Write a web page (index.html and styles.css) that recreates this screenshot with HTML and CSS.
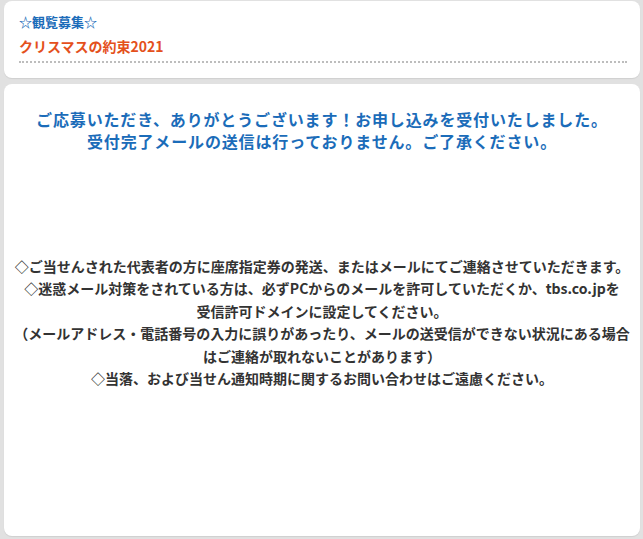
FILE: index.html
```html
<!DOCTYPE html>
<html lang="ja">
<head>
<meta charset="utf-8">
<title>クリスマスの約束2021</title>
<link rel="stylesheet" href="styles.css">
</head>
<body>
<div class="page">
  <section class="card head-card">
    <div class="label">☆観覧募集☆</div>
    <div class="title">クリスマスの約束2021</div>
  </section>
  <section class="card main-card">
    <div class="thanks">
      <p>ご応募いただき、ありがとうございます！お申し込みを受付いたしました。</p>
      <p>受付完了メールの送信は行っておりません。ご了承ください。</p>
    </div>
    <div class="notes">
      <p>◇ご当せんされた代表者の方に座席指定券の発送、またはメールにてご連絡させていただきます。</p>
      <p>◇迷惑メール対策をされている方は、必ずPCからのメールを許可していただくか、tbs.co.jpを<br>受信許可ドメインに設定してください。</p>
      <p>（メールアドレス・電話番号の入力に誤りがあったり、メールの送受信ができない状況にある場合<br>はご連絡が取れないことがあります）</p>
      <p>◇当落、および当せん通知時期に関するお問い合わせはご遠慮ください。</p>
    </div>
  </section>
</div>
</body>
</html>
```
FILE: styles.css
```css
html, body {
  margin: 0;
  padding: 0;
  background: #e1e1e1;
}
body {
  font-family: "Noto Sans CJK JP", "Noto Sans", sans-serif;
  font-weight: bold;
}
.page {
  height: 100vh;
  box-sizing: border-box;
  padding: 1px 3px 3px 4px;
  display: flex;
  flex-direction: column;
  gap: 6px;
  overflow: hidden;
}
.card {
  background: #fff;
  border-radius: 8px;
  box-sizing: border-box;
  box-shadow: 0 1px 1px rgba(0, 0, 0, 0.08);
}
.head-card {
  flex: 0 0 77px;
  padding: 9px 13px 0 15px;
}
.label {
  font-size: 13px;
  line-height: 24px;
  height: 24px;
  color: #1b6cb9;
}
.title {
  font-size: 14px;
  line-height: 24px;
  height: 24px;
  color: #e4501c;
  padding-bottom: 3px;
  border-bottom: 2px dotted #bdbdbd;
}
.main-card {
  flex: 1 1 auto;
  min-height: 0;
  padding: 24px 8px 0 8px;
}
.main-card p {
  margin: 0;
}
.thanks {
  text-align: center;
  font-size: 16px;
  letter-spacing: 0.85px;
  line-height: 22px;
  color: #1b6cb9;
}
.notes {
  margin-top: 103px;
  text-align: center;
  font-size: 14px;
  line-height: 22.4px;
  color: #333;
}
```
